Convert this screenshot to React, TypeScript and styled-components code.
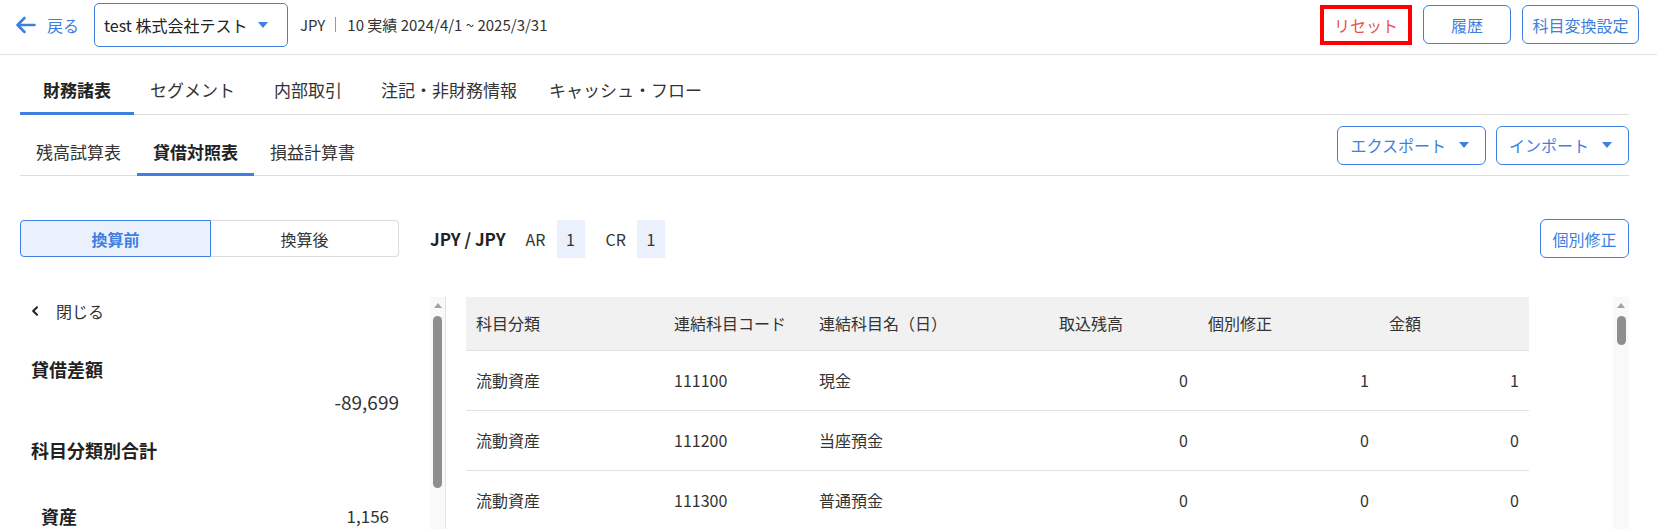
import React from 'react';
import styled, { createGlobalStyle } from 'styled-components';

const BLUE = '#3e7fe0';
const LINE = '#e2e2e2';

const GlobalStyle = createGlobalStyle`
  *, *::before, *::after { box-sizing: border-box; }
  html, body {
    margin: 0;
    padding: 0;
    overflow: hidden;
    background: #fff;
    color: #333;
    font-family: 'Noto Sans CJK JP', 'Noto Sans', sans-serif;
  }
`;

const Page = styled.div`
  width: 1657px;
  height: 529px;
  overflow: hidden;
`;

/* ---------- header ---------- */

const Header = styled.header`
  display: flex;
  align-items: center;
  height: 52px;
  margin-top: 3px;
  padding: 0 18px 8px 15px;
  border-bottom: 1px solid ${LINE};
`;

const BackLink = styled.a`
  display: flex;
  align-items: center;
  gap: 11px;
  color: ${BLUE};
  font-size: 16px;
  text-decoration: none;
  cursor: pointer;
`;

const CompanySelect = styled.div`
  display: flex;
  align-items: center;
  justify-content: space-between;
  width: 194px;
  height: 44px;
  margin-left: 15px;
  padding: 0 19px 0 9px;
  border: 1px solid ${BLUE};
  border-radius: 5px;
  font-size: 16px;
  color: #222;
`;

const Meta = styled.div`
  display: flex;
  align-items: center;
  margin-left: 12px;
  font-size: 15px;
  color: #333;
`;

const Divider = styled.span`
  width: 1px;
  height: 15px;
  margin: 0 11px 0 10px;
  background: #999;
`;

const HeaderActions = styled.div`
  display: flex;
  align-items: center;
  gap: 11px;
  margin-left: auto;
`;

const ResetButton = styled.button`
  width: 92px;
  height: 40px;
  border: 4px solid #ff0000;
  background: #fff;
  color: #e5534b;
  font-family: inherit;
  font-size: 16px;
`;

const OutlineButton = styled.button<{ $width?: number }>`
  display: flex;
  align-items: center;
  justify-content: center;
  gap: 13px;
  width: ${p => (p.$width ? `${p.$width}px` : 'auto')};
  height: 39px;
  padding: ${p => (p.$width ? '0' : '0 16px 0 12px')};
  border: 1px solid ${BLUE};
  border-radius: 6px;
  background: #fff;
  color: ${BLUE};
  font-family: inherit;
  font-size: 16px;
  cursor: pointer;
`;

const PushRight = styled.div`
  margin-left: auto;
`;

/* ---------- tabs ---------- */

const Main = styled.main`
  padding: 0 28px 0 20px;
`;

const TabBar = styled.nav`
  display: flex;
  margin-top: 12px;
  border-bottom: 1px solid #dddddd;
`;

const Tab = styled.div<{ $active?: boolean }>`
  display: flex;
  align-items: center;
  justify-content: center;
  min-width: 114px;
  height: 48px;
  margin-bottom: -1px;
  padding: 0 16px;
  border-bottom: 3px solid ${p => (p.$active ? BLUE : 'transparent')};
  font-size: 17px;
  font-weight: ${p => (p.$active ? 700 : 400)};
  color: ${p => (p.$active ? '#222' : '#333')};
  white-space: nowrap;
`;

const SubBar = styled.div`
  display: flex;
  align-items: center;
  justify-content: space-between;
  height: 61px;
  border-bottom: 1px solid #dddddd;
`;

const SubTabs = styled.div`
  display: flex;
  align-self: flex-end;
`;

const SubTab = styled(Tab)`
  height: 46px;
`;

const SubActions = styled.div`
  display: flex;
  gap: 10px;
`;

/* ---------- toolbar ---------- */

const Toolbar = styled.div`
  display: flex;
  align-items: center;
  height: 39px;
  margin-top: 43px;
`;

const Toggle = styled.div`
  display: flex;
  width: 379px;
  height: 37px;
`;

const ToggleItem = styled.div<{ $active?: boolean }>`
  flex: ${p => (p.$active ? '0 0 191px' : '1')};
  display: flex;
  align-items: center;
  justify-content: center;
  border: 1px solid ${p => (p.$active ? BLUE : '#dcdcdc')};
  border-left-width: ${p => (p.$active ? '1px' : '0')};
  border-radius: ${p => (p.$active ? '4px 0 0 4px' : '0 4px 4px 0')};
  background: ${p => (p.$active ? '#eaf1fc' : '#fff')};
  color: ${p => (p.$active ? BLUE : '#333')};
  font-size: 16px;
  font-weight: ${p => (p.$active ? 700 : 400)};
`;

const Rates = styled.div`
  display: flex;
  align-items: center;
  margin-left: 31px;
  font-size: 16px;
  color: #333;
`;

const Pair = styled.span`
  font-size: 17px;
  font-weight: 700;
  color: #222;
  margin-right: 20px;
`;

const RateLabel = styled.span`
  margin-right: 11px;
`;

const RateValue = styled.span`
  display: flex;
  align-items: center;
  justify-content: center;
  width: 28px;
  height: 38px;
  margin-right: 21px;
  background: #eaf1fc;
`;

/* ---------- content ---------- */

const Content = styled.div`
  display: flex;
  height: 240px;
  margin-top: 39px;
  overflow: hidden;
`;

const SidePanel = styled.aside`
  width: 379px;
  flex-shrink: 0;
  padding-left: 11px;
`;

const CloseRow = styled.div`
  display: flex;
  align-items: center;
  gap: 17px;
  height: 27px;
  font-size: 16px;
  color: #333;
`;

const PanelHeading = styled.div<{ $top: number }>`
  margin-top: ${p => p.$top}px;
  line-height: 26px;
  font-size: 18px;
  font-weight: 700;
  color: #222;
`;

const PanelAmount = styled.div`
  margin-top: 7px;
  line-height: 26px;
  font-size: 19px;
  text-align: right;
`;

const SummaryRow = styled.div`
  display: flex;
  justify-content: space-between;
  align-items: center;
  margin-top: 40px;
  padding: 0 10px;
  line-height: 26px;
  font-size: 17px;
`;

const SummaryLabel = styled.span`
  font-size: 18px;
  font-weight: 700;
  color: #222;
`;

const ScrollTrack = styled.div<{ $line?: boolean }>`
  display: flex;
  flex-direction: column;
  align-items: center;
  width: 16px;
  flex-shrink: 0;
  padding-top: 6px;
  background: #f9f9f9;
  border-right: ${p => (p.$line ? `1px solid ${LINE}` : 'none')};
`;

const LeftTrack = styled(ScrollTrack)`
  margin-left: 31px;
`;

const RightTrack = styled(ScrollTrack)`
  margin-left: auto;
`;

const ScrollThumb = styled.div<{ $height: number }>`
  width: 9px;
  height: ${p => p.$height}px;
  margin-top: 8px;
  border-radius: 5px;
  background: #8e8e8e;
`;

const TableArea = styled.div`
  flex: 1;
  display: flex;
  margin-left: 20px;
`;

const Table = styled.table`
  width: 1063px;
  border-collapse: collapse;
  table-layout: fixed;
  font-size: 16px;
  align-self: flex-start;
`;

const Th = styled.th`
  height: 53px;
  padding: 0 10px;
  background: #f1f1f1;
  border-bottom: 1px solid ${LINE};
  font-weight: 400;
  text-align: left;
  color: #333;
`;

const Td = styled.td<{ $num?: boolean }>`
  height: 60px;
  padding: 0 10px;
  border-bottom: 1px solid ${LINE};
  text-align: ${p => (p.$num ? 'right' : 'left')};
  color: #333;
`;

/* ---------- icons ---------- */

const Caret = ({ color = BLUE }: { color?: string }) => (
  <svg width="10" height="6" viewBox="0 0 10 6">
    <polygon points="0,0 10,0 5,6" fill={color} />
  </svg>
);

const BackArrow = () => (
  <svg width="21" height="18" viewBox="0 0 21 18" fill="none">
    <path d="M19.5 9H2.5M9.5 2L2.5 9l7 7" stroke={BLUE} strokeWidth="2.6" strokeLinecap="round" strokeLinejoin="round" />
  </svg>
);

const ChevronLeft = () => (
  <svg width="8" height="10" viewBox="0 0 8 10" fill="none">
    <path d="M6 1.2L2.2 5 6 8.8" stroke="#222" strokeWidth="2" strokeLinecap="round" strokeLinejoin="round" />
  </svg>
);

const ScrollUp = () => (
  <svg width="8" height="5" viewBox="0 0 8 5">
    <polygon points="0,5 8,5 4,0" fill="#a3a3a3" />
  </svg>
);

const columns = [
  { label: '科目分類', width: 198 },
  { label: '連結科目コード', width: 145 },
  { label: '連結科目名（日）', width: 240 },
  { label: '取込残高', width: 149 },
  { label: '個別修正', width: 181 },
  { label: '金額', width: 150 },
];

const rows = [
  { kind: '流動資産', code: '111100', name: '現金', imported: '0', adjust: '1', amount: '1' },
  { kind: '流動資産', code: '111200', name: '当座預金', imported: '0', adjust: '0', amount: '0' },
  { kind: '流動資産', code: '111300', name: '普通預金', imported: '0', adjust: '0', amount: '0' },
];

export default function App() {
  return (
    <Page>
      <GlobalStyle />
      <Header>
        <BackLink>
          <BackArrow />
          戻る
        </BackLink>
        <CompanySelect>
          <span>test 株式会社テスト</span>
          <Caret />
        </CompanySelect>
        <Meta>
          JPY
          <Divider />
          10 実績 2024/4/1 ~ 2025/3/31
        </Meta>
        <HeaderActions>
          <ResetButton>リセット</ResetButton>
          <OutlineButton $width={88}>履歴</OutlineButton>
          <OutlineButton $width={117}>科目変換設定</OutlineButton>
        </HeaderActions>
      </Header>

      <Main>
        <TabBar>
          <Tab $active>財務諸表</Tab>
          <Tab>セグメント</Tab>
          <Tab>内部取引</Tab>
          <Tab>注記・非財務情報</Tab>
          <Tab>キャッシュ・フロー</Tab>
        </TabBar>

        <SubBar>
          <SubTabs>
            <SubTab>残高試算表</SubTab>
            <SubTab $active>貸借対照表</SubTab>
            <SubTab>損益計算書</SubTab>
          </SubTabs>
          <SubActions>
            <OutlineButton>
              エクスポート
              <Caret />
            </OutlineButton>
            <OutlineButton>
              インポート
              <Caret />
            </OutlineButton>
          </SubActions>
        </SubBar>

        <Toolbar>
          <Toggle>
            <ToggleItem $active>換算前</ToggleItem>
            <ToggleItem>換算後</ToggleItem>
          </Toggle>
          <Rates>
            <Pair>JPY / JPY</Pair>
            <RateLabel>AR</RateLabel>
            <RateValue>1</RateValue>
            <RateLabel>CR</RateLabel>
            <RateValue>1</RateValue>
          </Rates>
          <PushRight>
            <OutlineButton $width={89}>個別修正</OutlineButton>
          </PushRight>
        </Toolbar>

        <Content>
          <SidePanel>
            <CloseRow>
              <ChevronLeft />
              閉じる
            </CloseRow>
            <PanelHeading $top={32}>貸借差額</PanelHeading>
            <PanelAmount>-89,699</PanelAmount>
            <PanelHeading $top={22}>科目分類別合計</PanelHeading>
            <SummaryRow>
              <SummaryLabel>資産</SummaryLabel>
              <span>1,156</span>
            </SummaryRow>
          </SidePanel>
          <LeftTrack $line>
            <ScrollUp />
            <ScrollThumb $height={172} />
          </LeftTrack>

          <TableArea>
            <Table>
              <colgroup>
                {columns.map(c => (
                  <col key={c.label} style={{ width: c.width }} />
                ))}
              </colgroup>
              <thead>
                <tr>
                  {columns.map(c => (
                    <Th key={c.label}>{c.label}</Th>
                  ))}
                </tr>
              </thead>
              <tbody>
                {rows.map(r => (
                  <tr key={r.code}>
                    <Td>{r.kind}</Td>
                    <Td>{r.code}</Td>
                    <Td>{r.name}</Td>
                    <Td $num>{r.imported}</Td>
                    <Td $num>{r.adjust}</Td>
                    <Td $num>{r.amount}</Td>
                  </tr>
                ))}
              </tbody>
            </Table>
            <RightTrack>
              <ScrollUp />
              <ScrollThumb $height={29} />
            </RightTrack>
          </TableArea>
        </Content>
      </Main>
    </Page>
  );
}
